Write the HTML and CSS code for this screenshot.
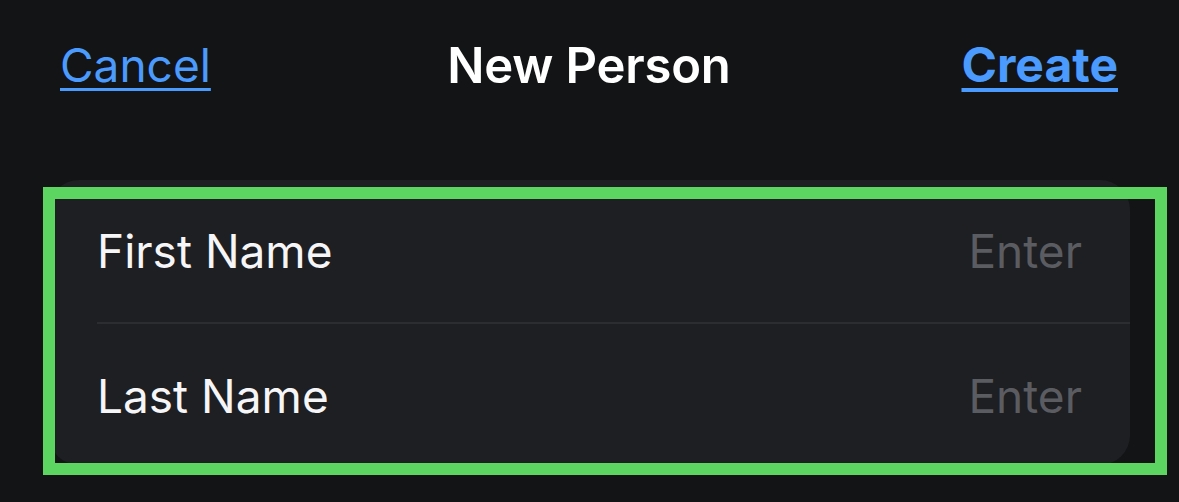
FILE: index.html
```html
<!DOCTYPE html>
<html lang="en">
<head>
<meta charset="utf-8">
<title>New Person</title>
<link rel="stylesheet" href="styles.css">
</head>
<body>
  <header class="nav">
    <a class="nav-action nav-cancel" href="#">Cancel</a>
    <h1 class="nav-title">New Person</h1>
    <a class="nav-action nav-create" href="#">Create</a>
  </header>

  <section class="form-wrap">
    <div class="form-card">
      <label class="form-row">
        <span class="form-label">First Name</span>
        <span class="form-value">Enter</span>
      </label>
      <label class="form-row">
        <span class="form-label">Last Name</span>
        <span class="form-value">Enter</span>
      </label>
    </div>
    <div class="focus-ring"></div>
  </section>
</body>
</html>
```

FILE: styles.css
```css
* {
  box-sizing: border-box;
}

html,
body {
  margin: 0;
  padding: 0;
  background: #131416;
  font-family: Inter, "Noto Sans", "Liberation Sans", sans-serif;
  color: #f4f4f6;
  overflow: hidden;
}

body {
  width: 1179px;
  height: 502px;
}

/* navigation bar */
.nav {
  display: grid;
  grid-template-columns: 1fr auto 1fr;
  align-items: center;
  padding: 36px 61px 0 60px;
  height: 94px;
}

.nav-action {
  font-size: 46px;
  line-height: 58px;
  color: #4a9bfd;
  text-decoration: underline;
  text-underline-offset: 6px;
  text-decoration-thickness: 3px;
}

.nav-cancel {
  justify-self: start;
  font-weight: 400;
}

.nav-create {
  justify-self: end;
  font-size: 48px;
  font-weight: 700;
  text-decoration-thickness: 4px;
}

.nav-title {
  margin: 0;
  font-size: 49px;
  line-height: 58px;
  font-weight: 600;
  color: #ffffff;
  letter-spacing: -0.2px;
  transform: translateY(1px);
}

/* grouped form */
.form-wrap {
  position: relative;
  margin: 86px 49px 0 49px;
}

.form-card {
  background: #1e1f22;
  border-radius: 30px;
  overflow: hidden;
}

.form-row {
  display: flex;
  align-items: center;
  justify-content: space-between;
  height: 142px;
  padding: 0 48px 0 48px;
  font-size: 46px;
}

.form-row + .form-row {
  height: 143px;
  border-top: 2px solid #2c2d31;
  margin-left: 48px;
  padding-left: 0;
  padding-top: 3px;
}

.form-label {
  color: #f6f6f8;
}

.form-value {
  color: #5b5c61;
}

/* selection highlight drawn over the group */
.focus-ring {
  position: absolute;
  left: -6px;
  top: 7px;
  width: 1124px;
  height: 288px;
  border: 12px solid #5cd661;
  pointer-events: none;
}
```
